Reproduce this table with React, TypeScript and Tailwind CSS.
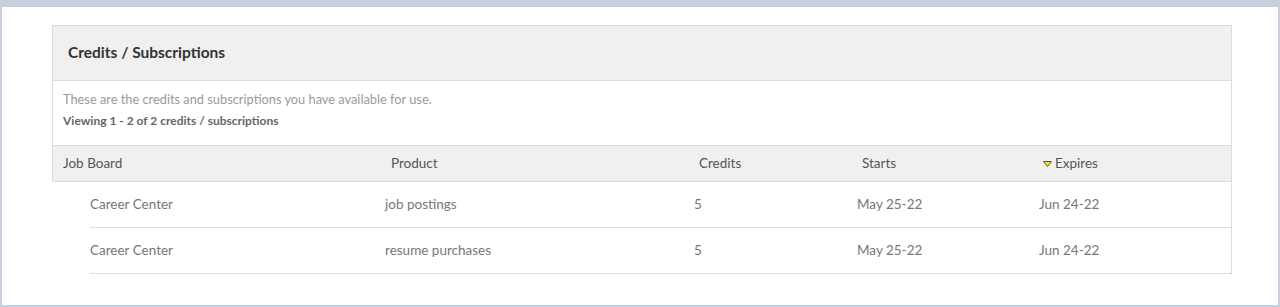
const FONT = "font-['Lato','Liberation_Sans',sans-serif]";

const rows = [
  { board: "Career Center", product: "job postings", credits: "5", starts: "May 25-22", expires: "Jun 24-22" },
  { board: "Career Center", product: "resume purchases", credits: "5", starts: "May 25-22", expires: "Jun 24-22" },
];

function SortDown() {
  return (
    <svg width="9" height="6" viewBox="0 0 9 6" className="mr-[3px]">
      <path d="M0.5 0.5 H8.5 L4.5 5.5 Z" fill="#f5e700" stroke="#555" strokeWidth="1" strokeLinejoin="round" />
    </svg>
  );
}

export default function App() {
  return (
    <div className={`${FONT} w-[1280px] h-[307px] bg-white border-t-[7px] border-x-2 border-b-2 border-[#c6d0df] overflow-hidden`}>
      <div className="ml-[50px] mt-[18px] w-[1180px] border-t border-r border-[#dcdcdc]">
        <div className="h-[55px] flex items-center pl-[15px] bg-[#f0f0f0] border-l border-b border-[#dcdcdc]">
          <h2 className="text-[15.5px] font-bold text-[#333]">Credits / Subscriptions</h2>
        </div>

        <div className="h-[64px] pl-[10px] pt-[9px] border-l border-[#dcdcdc]">
          <p className="text-[12.8px] text-[#9a9a9a] leading-[18px]">
            These are the credits and subscriptions you have available for use.
          </p>
          <p className="text-[12px] font-bold text-[#666] leading-[18px] mt-[4px]">
            Viewing 1 - 2 of 2 credits / subscriptions
          </p>
        </div>

        <div className="h-[37px] flex items-center pl-[10px] bg-[#f0f0f0] border-l border-y border-[#dcdcdc] text-[13.5px] text-[#555]">
          <div className="w-[328px]">Job Board</div>
          <div className="w-[308px]">Product</div>
          <div className="w-[163px]">Credits</div>
          <div className="w-[181px]">Starts</div>
          <div className="flex items-center">
            <SortDown />
            Expires
          </div>
        </div>

        <div className="ml-[38px]">
          {rows.map((r, i) => (
            <div key={i} className="h-[46px] flex items-center border-b border-[#dcdcdc] text-[13.5px] text-[#777]">
              <div className="w-[295px]">{r.board}</div>
              <div className="w-[309px]">{r.product}</div>
              <div className="w-[163px]">{r.credits}</div>
              <div className="w-[182px]">{r.starts}</div>
              <div>{r.expires}</div>
            </div>
          ))}
        </div>
      </div>
    </div>
  );
}
